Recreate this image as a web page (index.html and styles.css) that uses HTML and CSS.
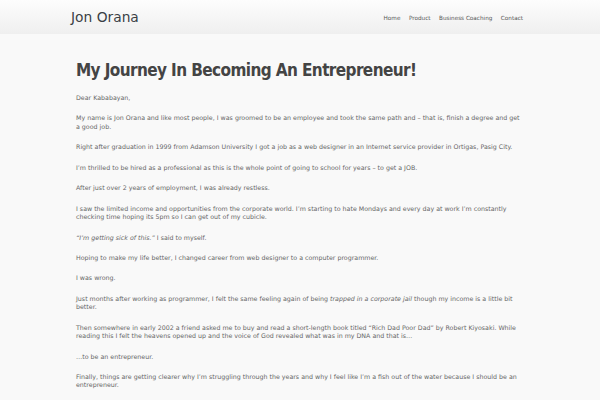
FILE: index.html
```html
<!DOCTYPE html>
<html>
<head>
<meta charset="utf-8">
<link rel="stylesheet" href="styles.css">
</head>
<body>
<header class="site-header">
  <div class="wrap header-inner">
    <div class="logo">Jon Orana</div>
    <nav class="nav">
      <a href="#">Home</a>
      <a href="#">Product</a>
      <a href="#">Business Coaching</a>
      <a href="#">Contact</a>
    </nav>
  </div>
</header>
<main class="wrap content">
  <h1 class="title">My Journey In Becoming An Entrepreneur!</h1>
  <p>Dear Kababayan,</p>
  <p>My name is Jon Orana and like most people, I was groomed to be an employee and took the same path and – that is, finish a degree and get a good job.</p>
  <p>Right after graduation in 1999 from Adamson University I got a job as a web designer in an Internet service provider in Ortigas, Pasig City.</p>
  <p>I’m thrilled to be hired as a professional as this is the whole point of going to school for years – to get a JOB.</p>
  <p>After just over 2 years of employment, I was already restless.</p>
  <p>I saw the limited income and opportunities from the corporate world. I’m starting to hate Mondays and every day at work I’m constantly checking time hoping its 5pm so I can get out of my cubicle.</p>
  <p><em>“I’m getting sick of this.”</em> I said to myself.</p>
  <p>Hoping to make my life better, I changed career from web designer to a computer programmer.</p>
  <p>I was wrong.</p>
  <p>Just months after working as programmer, I felt the same feeling again of being <em>trapped in a corporate jail</em> though my income is a little bit better.</p>
  <p>Then somewhere in early 2002 a friend asked me to buy and read a short-length book titled “Rich Dad Poor Dad” by Robert Kiyosaki. While reading this I felt the heavens opened up and the voice of God revealed what was in my DNA and that is…</p>
  <p>…to be an entrepreneur.</p>
  <p>Finally, things are getting clearer why I’m struggling through the years and why I feel like I’m a fish out of the water because I should be an entrepreneur.</p>
</main>
</body>
</html>
```
FILE: styles.css
```css
html, body {
  margin: 0;
  padding: 0;
}
body {
  background: #f9f9f9;
  font-family: "DejaVu Sans", Verdana, sans-serif;
  color: #666;
  overflow: hidden;
}
.wrap {
  width: 458px;
  margin: 0 auto;
  box-sizing: border-box;
}
.site-header {
  height: 34px;
  background: linear-gradient(#fdfdfd, #efefef);
}
.header-inner {
  height: 34px;
  display: flex;
  align-items: center;
  justify-content: space-between;
}
.logo {
  font-size: 13.8px;
  color: #3a3f45;
  margin-top: -1px;
}
.nav {
  display: flex;
  gap: 8.5px;
  padding-right: 6px;
  margin-top: 2px;
}
.nav a {
  font-size: 5.7px;
  color: #555;
  text-decoration: none;
}
.content {
  padding: 26px 5px 0;
}
.title {
  margin: 0 0 14px;
  font-family: "DejaVu Sans Condensed", "DejaVu Sans", sans-serif;
  font-stretch: condensed;
  font-size: 17px;
  letter-spacing: -0.6px;
  line-height: 20px;
  font-weight: bold;
  color: #444;
}
.content p {
  font-size: 6.3px;
  line-height: 8.3px;
  margin: 0 0 12.2px;
}
```
